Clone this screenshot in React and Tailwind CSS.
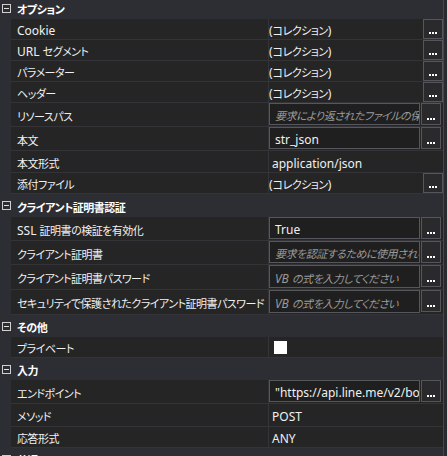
import React from 'react';

const font = { fontFamily: '"Noto Sans", "Noto Sans CJK JP", sans-serif' };

// Latin runs in 12px, Japanese runs slightly tighter so widths match the original UI font
function T({ children }) {
  const parts = String(children).split(/([\x20-\x7E]+)/).filter(Boolean);
  return (
    <>
      {parts.map((p, i) =>
        /^[\x20-\x7E]+$/.test(p) ? (
          <span key={i} className="text-[12px]">{p}</span>
        ) : (
          <span key={i} className="text-[11px] tracking-[-0.5px]">{p}</span>
        )
      )}
    </>
  );
}

const rows = [
  { kind: 'header', label: 'オプション', h: 'h-[19px]', top: true },
  { label: 'Cookie', kind: 'coll', h: 'h-[21px]' },
  { label: 'URL セグメント', kind: 'coll', h: 'h-[21px]' },
  { label: 'パラメーター', kind: 'coll', h: 'h-[21px]' },
  { label: 'ヘッダー', kind: 'coll', h: 'h-[21px]' },
  { label: 'リソースパス', kind: 'box', ph: '要求により返されたファイルの保存先のパス', h: 'h-[24px]' },
  { label: '本文', kind: 'box', value: 'str_json', h: 'h-[24px]' },
  { label: '本文形式', kind: 'text', value: 'application/json', h: 'h-[22px]' },
  { label: '添付ファイル', kind: 'coll', h: 'h-[21px]' },
  { kind: 'header', label: 'クライアント証明書認証', h: 'h-[23px]' },
  { label: 'SSL 証明書の検証を有効化', kind: 'box', value: 'True', h: 'h-[24px]' },
  { label: 'クライアント証明書', kind: 'box', ph: '要求を認証するために使用される証明書', h: 'h-[24px]' },
  { label: 'クライアント証明書パスワード', kind: 'box', ph: 'VB の式を入力してください', h: 'h-[25px]' },
  { label: 'セキュリティで保護されたクライアント証明書パスワード', kind: 'box', ph: 'VB の式を入力してください', h: 'h-[25px]' },
  { kind: 'header', label: 'その他', h: 'h-[22px]' },
  { label: 'プライベート', kind: 'check', h: 'h-[21px]' },
  { kind: 'header', label: '入力', h: 'h-[22px]' },
  { label: 'エンドポイント', kind: 'box', value: '"https://api.line.me/v2/bot/message/push"', h: 'h-[24px]' },
  { label: 'メソッド', kind: 'text', value: 'POST', h: 'h-[23px]' },
  { label: '応答形式', kind: 'text', value: 'ANY', h: 'h-[21px]' },
  { kind: 'header', label: '共通', h: 'h-[22px]' },
];

function Minus() {
  return (
    <svg width="9" height="9" viewBox="0 0 9 9" className="shrink-0">
      <rect x="0.5" y="0.5" width="8" height="8" fill="none" stroke="#d0d0d0" />
      <line x1="2" y1="4.5" x2="7" y2="4.5" stroke="#e0e0e0" />
    </svg>
  );
}

function Dots({ tall }) {
  return (
    <div
      className={`w-[20px] ${tall ? 'h-[20px]' : 'h-[22px]'} shrink-0 border border-[#55565b] bg-[#2a2a2d] flex items-end justify-center pb-[4px] gap-[1px]`}
    >
      <span className="w-[2px] h-[2px] bg-white" />
      <span className="w-[2px] h-[2px] bg-white" />
      <span className="w-[2px] h-[2px] bg-white" />
    </div>
  );
}

function Value({ row }) {
  if (row.kind === 'coll') {
    return (
      <div className="flex items-center h-full w-full">
        <span className="flex-1 text-[#f0f0f0] whitespace-nowrap">
          <T>(コレクション)</T>
        </span>
        <Dots tall />
      </div>
    );
  }
  if (row.kind === 'box') {
    return (
      <div className="flex items-start h-full w-full gap-[1px]">
        <div className="w-[151px] shrink-0 h-[calc(100%-1px)] border border-[#56575c] bg-[#1f1f1f] flex items-center px-[5px] overflow-hidden">
          {row.value ? (
            <span className="text-[#f0f0f0] whitespace-nowrap">
              <T>{row.value}</T>
            </span>
          ) : (
            <span className="text-[#9a9a9a] italic whitespace-nowrap">
              <T>{row.ph}</T>
            </span>
          )}
        </div>
        <Dots />
      </div>
    );
  }
  if (row.kind === 'check') {
    return (
      <div className="flex items-center h-full pl-[5px]">
        <div className="w-[13px] h-[13px] bg-white" />
      </div>
    );
  }
  return (
    <div className="flex items-center h-full pl-[3px]">
      <span className="text-[#f0f0f0]">
        <T>{row.value}</T>
      </span>
    </div>
  );
}

export default function App() {
  return (
    <div
      className="w-[447px] h-[456px] overflow-hidden bg-[#2d2e33] flex [font-feature-settings:'palt']"
      style={font}
    >
      <div className="w-[443px] flex flex-col shrink-0">
        {rows.map((row, i) =>
          row.kind === 'header' ? (
            <div key={i} className={`${row.h} shrink-0 flex items-center bg-[#2d2e33] overflow-hidden`}>
              <div className={`flex items-center gap-[6px] pl-[2px] ${row.top ? '-mt-[3px]' : ''}`}>
                <Minus />
                <span className="font-bold text-white whitespace-nowrap">
                  <T>{row.label}</T>
                </span>
              </div>
            </div>
          ) : (
            <div key={i} className={`${row.h} shrink-0 flex`}>
              <div className="w-[11px] shrink-0 bg-[#2d2e33]" />
              <div className="flex flex-1 min-w-0 bg-[#252526] border-b border-[#343438]">
                <div className="w-[258px] shrink-0 border-r border-[#343438] flex items-center pl-[6px] overflow-hidden">
                  <span className="text-[#f0f0f0] whitespace-nowrap">
                    <T>{row.label}</T>
                  </span>
                </div>
                <div className="flex-1 min-w-0 overflow-hidden">
                  <Value row={row} />
                </div>
              </div>
            </div>
          )
        )}
      </div>
      <div className="w-[1px] bg-[#46474c] shrink-0" />
      <div className="flex-1 bg-[#2a2b2f]" />
    </div>
  );
}
